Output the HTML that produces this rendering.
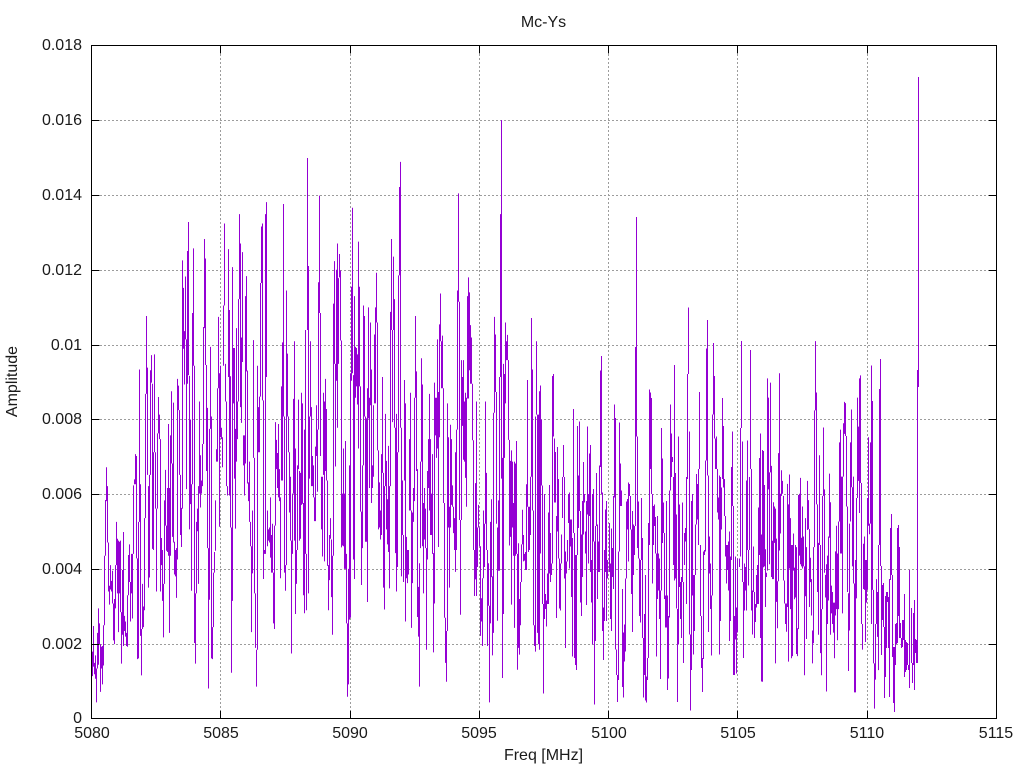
<!DOCTYPE html>
<html><head><meta charset="utf-8"><title>Mc-Ys</title>
<style>html,body{margin:0;padding:0;background:#fff;width:1024px;height:768px;overflow:hidden}svg{display:block}text{font-family:"Liberation Sans",sans-serif;font-size:16px;fill:#1a1a1a}</style>
</head><body>
<svg width="1024" height="768" viewBox="0 0 1024 768" xmlns="http://www.w3.org/2000/svg">
<rect width="1024" height="768" fill="#fff"/>
<path d="M100 120.5H988M100 195.5H988M100 270.5H988M100 345.5H988M100 419.5H988M100 494.5H988M100 569.5H988M100 644.5H988M220.5 54V710M350.5 54V710M479.5 54V710M608.5 54V710M737.5 54V710M867.5 54V710" fill="none" stroke="#9c9c9c" stroke-width="1" stroke-dasharray="2 2"/>
<g fill="none" stroke="#9400d3" stroke-width="1">
<path transform="translate(85.17,140) scale(.33333,.3762)" vector-effect="non-scaling-stroke" d="M22 1360V1425M25 1292V1400M28 1390V1420M31 1370V1432M34 1405V1495M37 1310V1405M40 1245V1395M43 1285V1340M46 1340V1467M49 1347V1405M52 1345V1447M55 1290V1397M58 1105V1290M61 957V1105M64 870V960M67 920V1070M70 1070V1200M73 1185V1235M76 1130V1195M79 1172V1200M82 1145V1232M85 1232V1330M88 1220V1340M91 1130V1245M94 1015V1130M97 1060V1205M100 1065V1308M103 1068V1205M106 1065V1255M109 1255V1392M112 1143V1315M115 1042V1345M118 1265V1305M121 1280V1320M124 1310V1345M127 1210V1347M130 1103V1210M133 1075V1175M136 1175V1280M139 1100V1205M142 1100V1272M145 918V1100M148 902V915M151 835V915M154 840V1112M157 1112V1380M160 1015V1378M163 610V1015M166 915V1318M169 1300V1423M172 1180V1300M175 1240V1295M178 1005V1250M181 675V1005M184 468V675M187 605V890M190 920V1190M193 890V1163M196 612V890M199 572V645M202 648V1087M205 830V1090M208 570V830M211 830V980M214 980V1200M217 780V980M220 683V780M223 730V795M226 795V1200M229 1058V1130M232 1090V1225M235 1180V1322M238 958V1180M241 877V1025M244 1025V1092M247 925V1095M250 755V1105M253 925V1310M256 785V1105M259 668V860M262 860V1055M265 698V1070M268 1068V1155M271 1090V1160M274 1085V1217M277 635V1115M280 653V718M283 718V890M286 890V1050M289 978V1082M292 320V980M295 393V555M298 508V650M301 363V530M304 530V928M307 295V648M310 218V625M313 627V1035M316 743V968M319 915V1198M322 460V915M325 288V600M328 600V1337M331 1205V1392M334 1015V1205M337 980V1040M340 920V1180M343 695V940M346 838V977M349 905V940M352 808V920M355 497V808M358 263V500M361 315V598M364 598V880M367 712V1085M370 1085V1458M373 768V1222M376 550V768M379 735V1378M382 1295V1380M385 1150V1295M388 1095V1150M391 958V1092M394 822V855M397 660V855M400 470V660M403 620V1028M406 600V790M409 765V795M412 790V870M415 440V600M418 222V440M421 595V695M424 695V920M427 920V945M430 290V630M433 452V945M436 628V1030M439 1030V1416M442 338V1225M445 553V700M448 553V900M451 768V1033M454 500V855M457 695V795M460 423V695M463 197V423M466 275V710M469 525V752M472 298V590M475 785V865M478 785V945M481 415V860M484 362V615M487 613V913M490 910V960M493 855V1015M496 1015V1080M499 1080V1308M502 985V1152M505 532V845M508 845V1205M511 1205V1350M514 1355V1453M517 600V1355M520 710V830M523 682V830M526 380V682M529 230V380M532 222V692M535 692V1167M538 1090V1100M541 197V1100M544 165V630M547 985V1080M550 1035V1065M553 1030V1070M556 950V1110M559 1050V1150M562 1020V1150M565 1150V1285M568 1025V1300M571 750V1025M574 797V875M577 832V925M580 755V950M583 875V960M586 950V1165M589 655V905M592 538V905M595 170V735M598 735V1150M601 1130V1198M604 400V1130M607 568V735M610 735V830M613 830V990M616 895V1065M619 1065V1365M622 940V1100M625 688V940M628 535V1065M631 820V1260M634 1090V1180M637 865V1090M640 690V875M643 880V1065M646 885V1060M649 672V970M652 700V967M655 965V1210M658 770V1258M661 505V1100M664 1100V1250M667 48V505M670 335V1205M673 735V900M676 535V735M679 710V920M682 840V920M685 865V950M688 950V1013"/>
<path transform="translate(310.5,140) scale(.33333,.3762)" vector-effect="non-scaling-stroke" d="M15 815V1013M18 705V840M21 770V935M24 378V770M27 148V460M30 460V840M33 895V1035M36 895V1107M39 672V890M42 695V1120M45 635V880M48 715V905M51 905V1132M54 1130V1250M57 1050V1170M60 1005V1060M63 1062V1215M66 1105V1315M69 435V1105M72 322V595M75 595V868M78 345V640M81 275V765M84 367V595M87 303V365M90 347V533M93 533V1083M96 940V1078M99 820V1080M102 940V1140M105 800V1140M108 1100V1285M111 1285V1480M114 1140V1447M117 865V1275M120 620V1270M123 390V640M126 180V620M129 625V1115M132 415V1167M135 550V685M138 553V655M141 570V703M144 270V820M147 390V655M150 655V988M153 988V1183M156 865V1085M159 440V865M162 468V735M165 735V1068M168 740V1068M171 660V1228M174 445V740M177 685V925M180 485V705M183 610V965M186 865V925M189 705V895M192 517V700M195 445V700M198 353V485M201 485V825M204 825V1035M207 910V1030M210 985V1062M213 835V1050M216 630V885M219 885V1190M222 920V1248M225 728V920M228 853V1035M231 955V1075M234 813V1095M237 920V1192M240 457V920M243 263V505M246 505V750M249 310V505M252 423V765M255 765V1098M258 728V1200M261 830V1135M264 360V830M267 125V360M270 58V765M273 765V1160M276 905V1050M279 1050V1175M282 638V905M285 700V1280M288 1055V1165M291 1090V1178M294 1090V1155M297 795V985M300 672V985M303 985V1297M306 990V1178M309 925V1015M312 685V960M315 468V685M318 615V880M321 875V1268M324 1188V1320M327 1125V1453M330 855V1085M333 580V855M336 650V1080M339 965V1205M342 925V1062M345 980V1085M348 1085V1355M351 880V1115M354 795V925M357 675V985M360 795V1050M363 940V1050M366 835V1100M369 1098V1362M372 645V1232M375 685V785M378 685V845M381 530V820M384 670V1082M387 490V790M390 408V535M393 535V660M396 520V660M399 660V965M402 965V1270M405 1270V1390M408 1305V1440M411 700V1305M414 790V1030M417 975V1190M420 757V1030M423 795V970M426 918V975M429 975V1045M432 1005V1090M435 830V1148M438 770V1090M441 400V770M444 142V430M447 430V1010M450 1010V1262M453 585V1010M456 630V760M459 585V850M462 695V855M465 672V898M468 685V975M471 415V687M474 365V687M477 405V612M480 492V648M483 525V648M486 648V798M489 798V1090M492 1090V1212M495 912V1168M498 695V1212M501 1030V1135M504 970V1030M507 1030V1080M510 1080V1318M513 1218V1280M516 1165V1345M519 985V1165M522 1020V1135M525 695V1020M528 885V1090M531 1090V1345M534 1125V1238M537 1238V1495M540 1015V1285M543 955V1162M546 1160V1370M549 725V1310M552 470V725M555 517V670M558 670V1020M561 1030V1278M564 958V1145M567 630V1145M570 197V630M573 -53V900M576 845V1430M579 595V1260M582 622V845M585 485V700M588 535V585M591 518V585M594 585V797M597 797V1078M600 853V1055M603 825V1235M606 855V1030M609 965V1105M612 855V1297M615 860V1105M618 800V1100M621 1100V1408M624 1072V1350M627 1220V1368M630 1175V1290M633 1075V1175M636 983V1075M639 1050V1120M642 1100V1118M645 1095V1143M648 915V1143M651 638V975M654 975V1095M657 975V1090M660 895V1050M663 473V895M666 610V985M669 985V1290M672 1290V1345M675 735V1360M678 535V730M681 730V1310M684 730V1340M687 668V1355"/>
<path shape-rendering="crispEdges" transform="translate(535.5,200) scale(.33333,.33806)" vector-effect="non-scaling-stroke" d="M15 548V1045M18 650V845M21 845V1195M24 1195V1460M27 870V1240M30 1165V1210M33 1185V1262M36 1105V1195M39 925V1195M42 843V1105M45 985V1130M48 1075V1110M51 520V1075M54 515V700M57 705V895M60 745V895M63 935V1237M66 730V980M69 825V1060M72 1060V1208M75 1075V1215M78 990V1075M81 820V940M84 725V820M87 820V1120M90 1040V1325M93 1070V1105M96 1005V1070M99 870V955M102 865V1090M105 945V1025M108 945V1175M111 1000V1350M114 618V985M117 985V1355M120 1050V1375M123 1050V1390M126 668V1050M129 815V970M132 655V920M135 920V1190M138 990V1230M141 890V1115M144 775V990M147 870V895M150 980V1045M153 890V1198M156 670V930M159 870V1075M162 750V935M165 725V1100M168 1065V1190M171 870V1315M174 855V1010M177 1010V1493M180 965V1305M183 808V965M186 960V1180M189 1010V1100M192 785V1100M195 505V790M198 462V870M201 865V1275M204 1205V1360M207 1035V1245M210 915V1100M213 890V1245M216 1065V1120M222 955V1100M225 1075V1240M228 972V1275M231 1030V1115M234 875V1150M237 605V880M240 645V1330M243 1330V1405M246 1405V1485M249 1040V1420M252 658V1040M255 780V905M258 860V905M261 1150V1440M264 1280V1472M267 1255V1365M270 1120V1335M273 892V1120M276 885V975M279 835V1070M282 840V875M285 875V975M288 975V1165M291 920V1278M294 960V1110M297 965V1050M300 435V965M303 50V700M306 700V1030M309 892V1060M312 1060V1230M315 1065V1250M318 882V1065M321 1000V1295M324 1295V1472M327 1225V1405M330 1110V1480M333 1410V1487M336 1355V1420M339 955V1355M342 560V1020M345 570V795M348 585V870M351 870V1135M354 905V1020M357 900V965M360 938V1045M363 1045V1350M366 935V1180M369 1045V1155M372 1060V1240M375 1155V1417M378 675V1155M381 765V1015M384 895V985M387 985V1180M390 1170V1265M393 890V1265M396 1170V1450M399 1230V1415M402 860V1235M405 605V860M408 690V820M411 760V775M414 820V1080M417 488V1125M420 808V1120M423 930V1208M426 1210V1485M429 700V1315M432 900V1145M435 1130V1240M438 1115V1295M441 895V1130M444 1130V1370M447 985V1080M450 970V1010M453 820V1195M456 515V825M459 318V515M462 685V1285M465 1285V1510M468 890V1390M471 870V1170M474 1110V1345M477 1110V1275M480 960V1110M483 810V960M486 840V945M489 795V1020M492 568V795M495 1020V1230M498 1230V1385M501 1355V1455M504 1040V1358M507 1035V1050M510 770V1040M513 440V770M516 355V815M519 815V1278M522 995V1105M525 1075V1210M528 1170V1348M531 635V1170M534 423V635M537 520V705M540 705V795M543 700V795M546 795V925M549 880V945M552 815V1345M555 820V1245M558 850V975M561 585V825M564 668V850M567 825V935M570 935V1055M573 1020V1135M576 1020V1095M579 1010V1155M582 980V1305M585 1055V1245M588 790V1065M591 685V905M594 905V1405M597 1230V1405M600 1055V1300M603 1205V1400M606 1060V1280M612 1060V1085M615 675V1055M618 417V675M621 715V1130M624 1130V1355M627 1075V1215M630 1085V1155M633 830V1215M636 712V1035M639 1035V1140M642 820V1035M645 443V795M648 795V1215M651 1155V1285M654 1025V1160M657 1160V1295M660 1195V1248M663 1110V1205M666 1080V1195M669 910V1195M672 763V1050M675 690V1295M678 990V1425M681 740V1040M684 745V1085M687 843V1000"/>
<path transform="translate(760.5,60) scale(.33333,.4273)" vector-effect="non-scaling-stroke" d="M3 1115V1350M6 915V1455M9 915V1187M12 995V1185M15 1145V1280M18 1200V1210M21 745V1195M24 790V1005M27 965V1180M30 755V965M33 950V1210M36 1125V1215M39 1035V1215M42 1045V1130M45 1050V1412M48 1120V1268M51 1220V1330M54 920V1220M57 733V1148M60 1015V1108M63 960V1020M66 985V1015M69 1020V1218M72 1218V1272M75 1272V1320M78 1272V1338M81 992V1280M84 1040V1408M87 970V1190M90 1072V1285M93 1135V1400M96 1135V1395M99 1108V1195M102 1188V1262M105 1135V1258M108 1140V1390M111 1330V1395M114 1018V1332M117 1015V1160M120 978V1180M123 1118V1185M126 1045V1190M129 1115V1185M132 1185V1440M135 1072V1255M138 1140V1355M141 985V1100M144 1030V1098M147 1098V1280M150 1165V1222M153 1215V1300M156 1335V1412M159 1140V1365M162 820V1140M165 658V820M168 778V1040M171 1040V1245M174 1130V1345M177 925V1135M180 1135V1388M183 1285V1440M186 1020V1285M189 860V1020M192 1005V1200M195 1205V1258M198 1180V1478M201 1160V1320M204 1115V1265M207 968V1118M210 1035V1345M213 1230V1295M216 1245V1320M219 1270V1340M222 1270V1400M225 1150V1300M228 1090V1285M231 1155V1358M234 1080V1285M237 895V1080M240 865V1155M243 975V1155M246 975V1295M249 850V975M252 800V875M255 803V880M258 880V1045M261 1045V1245M264 1248V1430M267 1085V1335M270 895V1080M273 818V1000M276 1000V1185M279 975V1225M282 1225V1480M285 1170V1480M288 1025V1260M291 790V1025M294 858V985M297 745V1060M300 738V990M303 990V1320M306 1320V1380M309 1132V1238M312 1115V1240M315 1170V1362M318 1170V1270M321 1025V1240M324 883V1090M327 1085V1110M330 895V1085M333 715V1320M336 798V1240M339 1240V1412M342 1412V1518M345 1320V1450M348 1215V1320M351 1245V1350M354 1135V1428M357 770V1135"/>
<path d="M880.5 359V566M881.5 566V655M882.5 585V620M883.5 583V627M884.5 627V698M885.5 596V677M886.5 592V648M887.5 592V602M888.5 597V648M889.5 579V697M890.5 528V580M891.5 514V575M892.5 575V657M893.5 647V703M894.5 647V712M895.5 624V665M896.5 623V644M897.5 528V643M898.5 525V616M899.5 547V638M900.5 623V638M901.5 638V648M902.5 620V647M903.5 620V640M904.5 594V677M905.5 640V672M906.5 642V670M907.5 643V665M908.5 665V670M909.5 570V688M911.5 608V663M912.5 663V683M913.5 613V665M914.5 600V690M915.5 639V653M916.5 640V663M917.5 370V663M918.5 77V387"/>
</g>
<path d="M91.5 45.5H996.5V718.5H91.5Z" fill="none" stroke="#000" stroke-width="1"/>
<path d="M91.5 120.5H99.5M91.5 195.5H99.5M91.5 270.5H99.5M91.5 345.5H99.5M91.5 419.5H99.5M91.5 494.5H99.5M91.5 569.5H99.5M91.5 644.5H99.5M996.5 120.5H988.5M996.5 195.5H988.5M996.5 270.5H988.5M996.5 345.5H988.5M996.5 419.5H988.5M996.5 494.5H988.5M996.5 569.5H988.5M996.5 644.5H988.5M220.5 45.5V53.5M350.5 45.5V53.5M479.5 45.5V53.5M608.5 45.5V53.5M737.5 45.5V53.5M867.5 45.5V53.5M220.5 718.5V710.5M350.5 718.5V710.5M479.5 718.5V710.5M608.5 718.5V710.5M737.5 718.5V710.5M867.5 718.5V710.5" fill="none" stroke="#000" stroke-width="1"/>
<g text-anchor="end">
<text x="82" y="723">0</text>
<text x="82" y="649">0.002</text>
<text x="82" y="574">0.004</text>
<text x="82" y="499">0.006</text>
<text x="82" y="424">0.008</text>
<text x="82" y="350">0.01</text>
<text x="82" y="275">0.012</text>
<text x="82" y="200">0.014</text>
<text x="82" y="125">0.016</text>
<text x="82" y="50">0.018</text>
</g>
<g text-anchor="middle">
<text x="92" y="738">5080</text>
<text x="221" y="738">5085</text>
<text x="350" y="738">5090</text>
<text x="479" y="738">5095</text>
<text x="609" y="738">5100</text>
<text x="738" y="738">5105</text>
<text x="867" y="738">5110</text>
<text x="996" y="738">5115</text>
<text x="543.5" y="760">Freq [MHz]</text>
<text x="543.5" y="27">Mc-Ys</text>
<text transform="translate(17,381.5) rotate(-90)">Amplitude</text>
</g>
</svg>
</body></html>
